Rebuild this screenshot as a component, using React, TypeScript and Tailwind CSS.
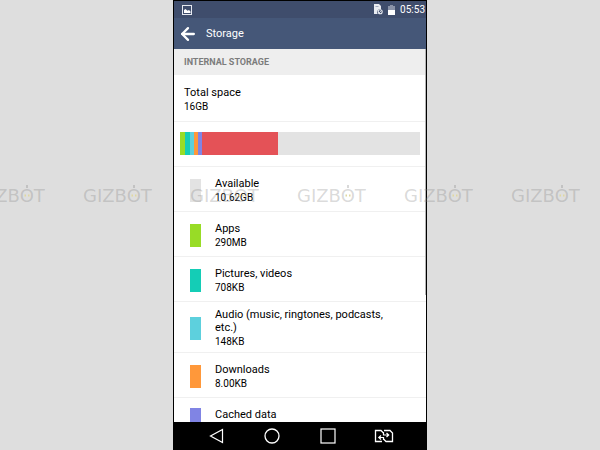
import { ArrowLeft } from "lucide-react"

type Item = { label: string; size: string; color: string }

const items: Item[] = [
  { label: "Available", size: "10.62GB", color: "bg-[#e3e3e3]" },
  { label: "Apps", size: "290MB", color: "bg-[#98dc26]" },
  { label: "Pictures, videos", size: "708KB", color: "bg-[#14cdb6]" },
  { label: "Audio (music, ringtones, podcasts, etc.)", size: "148KB", color: "bg-[#5dd0dd]" },
  { label: "Downloads", size: "8.00KB", color: "bg-[#ff983a]" },
]

// share of the total space, in percent
const segments = [
  { share: 2, color: "bg-[#98dc26]" },
  { share: 2, color: "bg-[#14cdb6]" },
  { share: 2, color: "bg-[#5dd0dd]" },
  { share: 1.5, color: "bg-[#ff983a]" },
  { share: 1.5, color: "bg-[#8084e4]" },
  { share: 32, color: "bg-[#e45257]" },
]

const StatusBar = () => (
  <div className="flex h-[17px] shrink-0 items-center justify-between bg-[#3f4d6c] pl-2 pr-px text-white">
    <svg width="10" height="10" viewBox="0 0 10 10" aria-hidden="true">
      <rect x="0.5" y="0.5" width="9" height="9" fill="none" stroke="#e6e9f0" />
      <path d="M2 8V5l1.5-1 2 1.7L7 5l1.5 1.5V8z" fill="#fff" />
    </svg>
    <div className="flex items-center gap-[5px]">
      <svg width="9" height="11" viewBox="0 0 9 11" aria-hidden="true">
        <path d="M0 0h5l2 2v3.4A3 3 0 0 0 3.6 10H0z" fill="#e9ecf2" />
        <path d="M1.5 2.5h3" stroke="#8d97ae" strokeWidth="0.8" />
        <circle cx="6.2" cy="7.8" r="2" fill="#3f4d6c" stroke="#e9ecf2" strokeWidth="1.1" />
        <path d="M5 9l2.4-2.4" stroke="#e9ecf2" strokeWidth="0.8" />
      </svg>
      <svg width="7" height="10" viewBox="0 0 7 10" aria-hidden="true">
        <path d="M2 0h3v1h2v9H0V1h2z" fill="#8a93a8" />
        <path d="M0 5h7v5H0z" fill="#fff" />
      </svg>
      <span className="text-[10px] leading-none">05:53</span>
    </div>
  </div>
)

const StorageRow = ({ label, size, color }: Item) => (
  <li className="flex min-h-[45px] shrink-0 items-center gap-[14px] border-b border-[#f0f0f0] pt-[6px] pb-[3px] pl-4 pr-6">
    <span className={`h-[23px] w-[11px] shrink-0 ${color}`} />
    <div>
      <p className="text-[11px] leading-[13px]">{label}</p>
      <p className="text-[10px] leading-[15px]">{size}</p>
    </div>
  </li>
)

const NavBar = () => (
  <nav className="flex h-7 shrink-0 items-center justify-center gap-9 bg-black text-white">
    <button aria-label="Back" className="flex w-5 justify-center">
      <svg width="15" height="16" viewBox="0 0 15 16" fill="none" stroke="currentColor" strokeWidth="1.2">
        <path d="M13.5 1.5v13L1.5 8z" />
      </svg>
    </button>
    <button aria-label="Home" className="flex w-5 justify-center">
      <svg width="16" height="16" viewBox="0 0 16 16" fill="none" stroke="currentColor" strokeWidth="1.3">
        <circle cx="8" cy="8" r="7" />
      </svg>
    </button>
    <button aria-label="Recent apps" className="flex w-5 justify-center">
      <svg width="16" height="16" viewBox="0 0 16 16" fill="none" stroke="currentColor">
        <rect x="1" y="1" width="14" height="14" strokeWidth="1.2" />
      </svg>
    </button>
    <button aria-label="Switch SIM" className="flex w-5 justify-center">
      <svg width="20" height="14" viewBox="0 0 20 14" fill="none" stroke="currentColor" strokeWidth="1.3">
        <path d="M8 12.5H1.5V1.5H7L9.5 4M10 1.5h6L18.5 4v8.5H12L9.5 10" />
        <path d="M9.5 3v3h5M12.5 4l2.2 2-2.2 2M9.5 11V8.5H5M7 6.5l-2.2 2 2.2 2" strokeWidth="1.2" />
      </svg>
    </button>
  </nav>
)

const BrandMark = () => (
  <span className="w-[107px] shrink-0">
    GIZB
    <span className="relative">
      O
      <svg className="absolute inset-x-0 top-0 mx-auto" width="8" height="16" viewBox="0 0 8 16" fill="none">
        <path d="M4 0v3" stroke="currentColor" strokeWidth="2" />
        <path d="M1.5 10.5H3M5 10.5h1.5" stroke="#e0d8a0" strokeWidth="2" />
      </svg>
    </span>
    T
  </span>
)

const App = () => (
  <div className="relative flex h-screen justify-center overflow-hidden bg-[#dedede] font-[Roboto,sans-serif] text-black">
    <main className="flex w-full max-w-[254px] flex-col overflow-hidden border-x border-t border-black bg-white">
      <StatusBar />
      <header className="flex h-[31px] shrink-0 items-center gap-2 bg-[#455778] pl-1 pt-px text-white">
        <button aria-label="Go back">
          <ArrowLeft size={20} strokeWidth={2.75} />
        </button>
        <h1 className="text-[11px]">Storage</h1>
      </header>

      <section className="relative flex min-h-0 flex-1 flex-col overflow-hidden">
        <h2 className="flex h-[26px] shrink-0 items-center bg-[#eeeeee] pl-[10px] pt-px text-[9px] font-bold text-[#7c7c7c]">
          INTERNAL STORAGE
        </h2>
        <div className="shrink-0 border-b border-[#f0f0f0] px-[10px] pt-[11px] pb-[7px]">
          <p className="text-[11px] leading-[13px]">Total space</p>
          <p className="text-[10px] leading-[15px]">16GB</p>
        </div>
        <div className="shrink-0 border-b border-[#f0f0f0] px-[6px] pt-[10px] pb-[11px]">
          <div className="flex h-[23px] bg-[#e3e3e3]">
            {segments.map((s) => (
              <span key={s.color} className={s.color} style={{ width: `${s.share}%` }} />
            ))}
          </div>
        </div>
        <ul className="flex flex-col">
          {items.map((item) => (
            <StorageRow key={item.label} {...item} />
          ))}
          <li className="flex shrink-0 items-start gap-[14px] pt-[10px] pl-4 pr-6">
            <span className="h-[23px] w-[11px] shrink-0 bg-[#8084e4]" />
            <p className="text-[11px] leading-[13px]">Cached data</p>
          </li>
        </ul>
        {/* Scroll indicator */}
        <span className="absolute right-0 top-0 h-[246px] w-px bg-[#b4b4b4]" />
      </section>

      <NavBar />
    </main>

    {/* Watermark */}
    <div
      aria-hidden="true"
      className="pointer-events-none absolute -left-6 top-[185px] flex font-['DejaVu_Sans',sans-serif] text-lg leading-[22px] text-[#808080]/30"
    >
      <BrandMark />
      <BrandMark />
      <BrandMark />
      <BrandMark />
      <BrandMark />
      <BrandMark />
    </div>
  </div>
)

export default App
